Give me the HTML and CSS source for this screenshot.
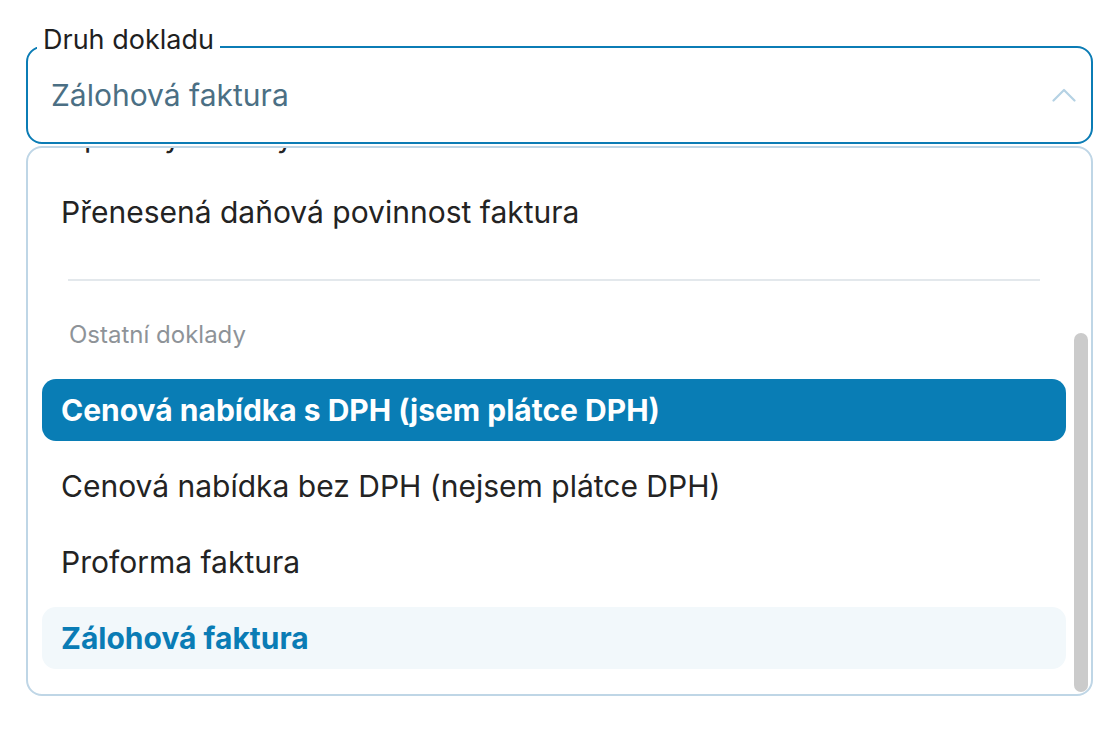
FILE: index.html
```html
<!DOCTYPE html>
<html lang="cs">
<head>
<meta charset="utf-8">
<title>Druh dokladu</title>
<link rel="stylesheet" href="styles.css">
</head>
<body>
<div class="page">
  <div class="select">
    <span class="select-label">Druh dokladu</span>
    <span class="select-value">Zálohová faktura</span>
    <svg class="chevron" width="24" height="14" viewBox="0 0 24 14" aria-hidden="true">
      <polyline points="1.5,12.5 12,2 22.5,12.5" fill="none" stroke="#b5d2e4" stroke-width="2.2" stroke-linecap="round" stroke-linejoin="round"/>
    </svg>
  </div>
  <div class="menu">
    <ul class="menu-list">
      <li class="option">Opravný daňový doklad</li>
      <li class="option">Přenesená daňová povinnost faktura</li>
      <li class="divider"></li>
      <li class="group-title">Ostatní doklady</li>
      <li class="option option-active">Cenová nabídka s DPH (jsem plátce DPH)</li>
      <li class="option">Cenová nabídka bez DPH (nejsem plátce DPH)</li>
      <li class="option">Proforma faktura</li>
      <li class="option option-selected">Zálohová faktura</li>
    </ul>
    <div class="scrollbar"></div>
  </div>
</div>
</body>
</html>
```

FILE: styles.css
```css
* {
  box-sizing: border-box;
}

html, body {
  margin: 0;
  padding: 0;
  background: #ffffff;
}

body {
  font-family: Inter, "Noto Sans", "Liberation Sans", sans-serif;
  color: #232323;
}

.page {
  padding: 46px 23px 0 26px;
}

.select {
  position: relative;
  height: 98px;
  border: 2px solid #0b7cb5;
  border-radius: 16px;
  display: flex;
  align-items: center;
  padding: 0 15px 0 23px;
}

.select-label {
  position: absolute;
  top: -22px;
  left: 9px;
  padding: 0 6px;
  background: #ffffff;
  font-size: 27px;
  line-height: 27px;
  color: #1f1f1f;
}

.select-value {
  flex: 1;
  font-size: 30px;
  line-height: 36px;
  color: #4b6f84;
}

.chevron {
  display: block;
  flex: none;
}

.menu {
  position: relative;
  margin-top: 2px;
  height: 550px;
  border: 2px solid #bfd6e6;
  border-radius: 16px;
  overflow: hidden;
}

.menu-list {
  list-style: none;
  margin: -43px 0 0 0;
  padding: 0 25px 25px 14px;
  display: flex;
  flex-direction: column;
}

.option {
  height: 62px;
  margin-bottom: 14px;
  padding-left: 19px;
  border-radius: 14px;
  font-size: 30px;
  line-height: 62px;
  white-space: nowrap;
  color: #232323;
}

.option:last-child {
  margin-bottom: 0;
}

.option-active {
  background: #097db5;
  color: #ffffff;
  font-weight: 700;
}

.option-selected {
  background: #f2f8fb;
  color: #0a7cb5;
  font-weight: 700;
}

.divider {
  height: 2px;
  margin: 22px 26px 0 26px;
  background: #e3e8ec;
}

.group-title {
  padding: 38px 0 28px 27px;
  font-size: 24px;
  line-height: 32px;
  color: #8e9398;
}

.scrollbar {
  position: absolute;
  right: 3px;
  bottom: 2px;
  width: 14px;
  height: 359px;
  border-radius: 7px;
  background: #cbcbcb;
}
```
